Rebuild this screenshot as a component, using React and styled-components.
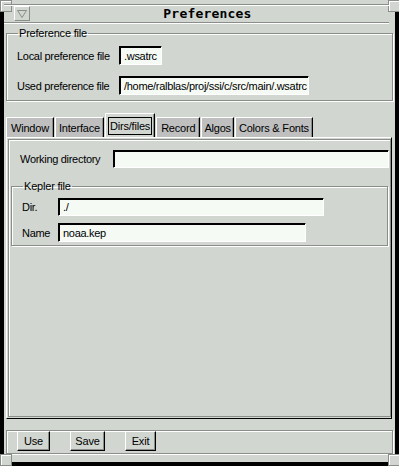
import React, { useState } from 'react';
import styled, { createGlobalStyle } from 'styled-components';

const bg = '#d1d6d1';
const dark = '#898e89';
const field = '#f5faf5';
const tabBg = '#bebfbe';

const GlobalStyle = createGlobalStyle`
    html, body {
        margin: 0;
        padding: 0;
        background: #000;
    }
    body {
        font-family: "Liberation Sans", Arial, sans-serif;
        font-size: 11px;
        color: #000;
    }
`;

const Screen = styled.div`
    width: 399px;
    height: 466px;
    overflow: hidden;
`;

const Window = styled.div`
    position: relative;
    margin-left: 4px;
    width: 391px;
    height: 462px;
    background: ${bg};
    display: flex;
    flex-direction: column;
    box-sizing: border-box;
    padding-top: 4px;
`;

const Corner = styled.div`
    position: absolute;
    width: 10px;
    height: 10px;
    background: ${bg};
    border: 1px solid ${dark};
    box-shadow: inset 1px 1px #fff;
    ${p => p.$pos === 'tl' && 'left: -4px; top: 0;'}
    ${p => p.$pos === 'tr' && 'right: -5px; top: 0;'}
    ${p => p.$pos === 'bl' && 'left: -4px; bottom: -4px;'}
    ${p => p.$pos === 'br' && 'right: -5px; bottom: -4px;'}
`;

const TitleBar = styled.div`
    height: 17px;
    border-top: 1px solid ${dark};
    border-bottom: 1px solid ${dark};
    box-shadow: inset 0 1px #fff, 0 1px #fff;
    display: flex;
    align-items: center;
    position: relative;
    margin-right: 6px;
`;

const MenuButton = styled.div`
    margin-left: 10px;
    width: 14px;
    height: 13px;
    border: 1px solid;
    border-color: #fff ${dark} ${dark} #fff;
    display: flex;
    align-items: center;
    justify-content: center;
`;

const Title = styled.div`
    flex: 1;
    text-align: center;
    font-family: "DejaVu Sans Mono", monospace;
    font-weight: bold;
    font-size: 13px;
    letter-spacing: 0.2px;
    margin-right: 4px;
`;

const Body = styled.div`
    flex: 1;
    display: flex;
    flex-direction: column;
    padding: 0 2px 8px 2px;
`;

const Group = styled.fieldset`
    margin: ${p => p.$margin || '0'};
    padding: ${p => p.$pad || '0'};
    border: 1px solid ${dark};
    box-shadow: inset 1px 1px #fff, 1px 1px #fff;
    min-width: 0;
    display: flex;
    flex-direction: column;
    gap: ${p => p.$gap || 0}px;
`;

const Legend = styled.legend`
    padding: 0 1px;
    margin-left: 1px;
    line-height: 13px;
    letter-spacing: -0.2px;
`;

const Row = styled.div`
    display: flex;
    align-items: center;
    height: ${p => p.$h || 19}px;
`;

const Label = styled.span`
    width: ${p => p.$w}px;
    flex-shrink: 0;
    letter-spacing: -0.3px;
`;

const Field = styled.div`
    width: ${p => p.$w}px;
    height: 100%;
    box-sizing: border-box;
    background: ${field};
    border: 1px solid;
    border-color: #000 #fff #fff #000;
    box-shadow: inset 1px 1px #000;
    padding-left: 4px;
    display: flex;
    align-items: center;
    white-space: nowrap;
    overflow: hidden;
    letter-spacing: -0.3px;
`;

const Tabs = styled.div`
    display: flex;
    align-items: flex-end;
    height: 24px;
    margin-top: 12px;
`;

const Tab = styled.div`
    height: ${p => (p.$active ? 24 : 20)}px;
    box-sizing: border-box;
    padding: 0 ${p => p.$pad || 4}px;
    background: ${p => (p.$active ? bg : tabBg)};
    border-top: 1px solid #fff;
    border-left: 1px solid #fff;
    border-right: 1px solid #000;
    box-shadow: inset -1px 0 ${dark};
    margin-right: 1px;
    display: flex;
    align-items: center;
    letter-spacing: -0.2px;
    cursor: default;
`;

const Focus = styled.span`
    border: 1px solid #000;
    padding: 2px 1px;
`;

const Panel = styled.div`
    flex: 1;
    border: 1px solid;
    border-color: #fff #000 #000 #fff;
    padding: 1px;
    display: flex;
    margin-right: 1px;
`;

const Inset = styled.div`
    flex: 1;
    border: 1px solid ${dark};
    box-shadow: inset 1px 1px #fff;
    padding: 10px 1px 0 1px;
    display: flex;
    flex-direction: column;
`;

const ButtonBar = styled.div`
    margin-top: 11px;
    height: 22px;
    border: 1px solid ${dark};
    box-shadow: inset 1px 1px #fff, 1px 1px #fff;
    display: flex;
    align-items: flex-start;
    padding-left: 10px;
    gap: 20px;
`;

const Button = styled.div`
    width: ${p => p.$w}px;
    height: 20px;
    box-sizing: border-box;
    border: 1px solid;
    border-color: #fff #000 #000 #fff;
    box-shadow: inset -1px -1px ${dark};
    display: flex;
    align-items: center;
    justify-content: center;
    letter-spacing: -0.2px;
`;

const tabs = [
    ['Window', 4],
    ['Interface', 3],
    ['Dirs/files', 2],
    ['Record', 4],
    ['Algos', 2],
    ['Colors & Fonts', 3],
];

export default function App() {
    const [active, setActive] = useState(2);

    return (
        <Screen>
            <GlobalStyle />
            <Window>
                <Corner $pos="tl" />
                <Corner $pos="tr" />
                <TitleBar>
                    <MenuButton>
                        <svg width="10" height="8" viewBox="0 0 10 8">
                            <path d="M0.5 0.5 H9.5 L5 7.5 Z" fill="none" stroke={dark} strokeWidth="1" />
                        </svg>
                    </MenuButton>
                    <Title>Preferences</Title>
                </TitleBar>
                <Body>
                    <Group $margin="4px 0 0 0" $pad="6px 0 5px 10px" $gap={11}>
                        <Legend>Preference file</Legend>
                        <Row $h={19}>
                            <Label $w={102}>Local preference file</Label>
                            <Field $w={43}>.wsatrc</Field>
                        </Row>
                        <Row $h={19}>
                            <Label $w={102}>Used preference file</Label>
                            <Field $w={190}>/home/ralblas/proj/ssi/c/src/main/.wsatrc</Field>
                        </Row>
                    </Group>
                    <Tabs>
                        {tabs.map(([name, pad], i) => (
                            <Tab key={name} $active={i === active} $pad={pad} onClick={() => setActive(i)}>
                                {i === active ? <Focus>{name}</Focus> : name}
                            </Tab>
                        ))}
                    </Tabs>
                    <Panel>
                        <Inset>
                            <Row $h={18} style={{ paddingLeft: 10 }}>
                                <Label $w={93}>Working directory</Label>
                                <Field $w={276}>{''}</Field>
                            </Row>
                            <Group $margin="12px 1px 0 1px" $pad="5px 0 3px 10px" $gap={7}>
                                <Legend>Kepler file</Legend>
                                <Row $h={18}>
                                    <Label $w={36}>Dir.</Label>
                                    <Field $w={266}>./</Field>
                                </Row>
                                <Row $h={19}>
                                    <Label $w={36}>Name</Label>
                                    <Field $w={248}>noaa.kep</Field>
                                </Row>
                            </Group>
                        </Inset>
                    </Panel>
                    <ButtonBar>
                        <Button $w={33}>Use</Button>
                        <Button $w={35}>Save</Button>
                        <Button $w={31}>Exit</Button>
                    </ButtonBar>
                </Body>
                <Corner $pos="bl" />
                <Corner $pos="br" />
            </Window>
        </Screen>
    );
}
